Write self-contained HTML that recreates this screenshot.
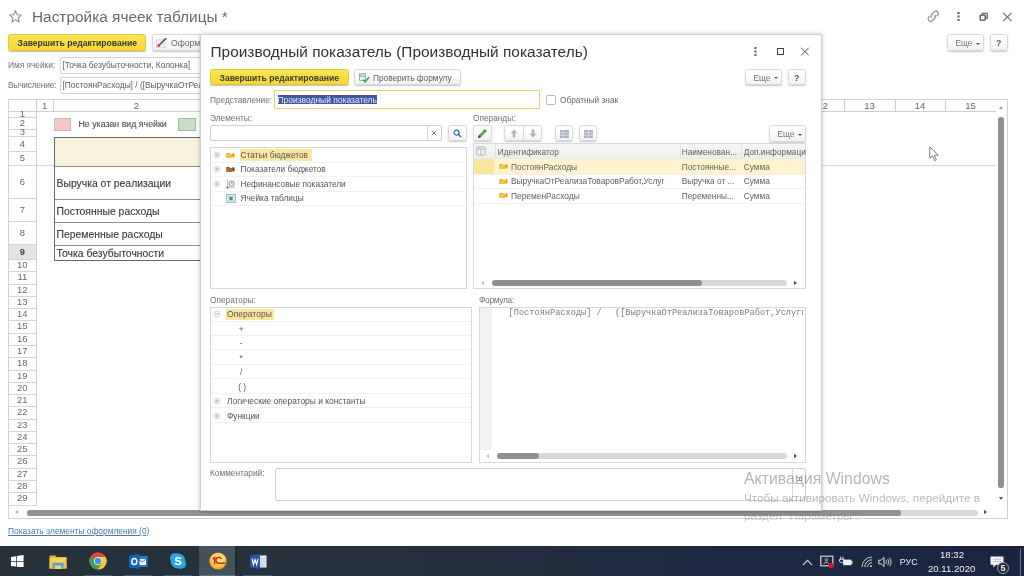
<!DOCTYPE html>
<html lang="ru">
<head>
<meta charset="utf-8">
<title>Настройка ячеек таблицы</title>
<style>
*{box-sizing:border-box;margin:0;padding:0}
html,body{width:1024px;height:576px;overflow:hidden;background:#fff}
body{font-family:"Liberation Sans",sans-serif;font-size:8.3px;color:#4a4a4a;position:relative}
#root{position:absolute;left:0;top:0;width:1024px;height:576px;overflow:hidden;will-change:transform}
.a{position:absolute}
.t{position:absolute;white-space:nowrap;line-height:10px;height:10px;font-size:8.3px;color:#555}
.btn{position:absolute;border:1px solid #d9d9d9;border-radius:2.5px;background:linear-gradient(#ffffff 25%,#f2f2f2);box-shadow:0 1px 1.5px rgba(0,0,0,.22);font-size:8.3px;color:#666;white-space:nowrap}
.ybtn{position:absolute;border:1px solid #e2c53a;border-radius:2.5px;background:linear-gradient(#fbe556,#f6d833);box-shadow:0 1px 1px rgba(0,0,0,.25);font-size:8.6px;font-weight:bold;color:#3b3a2c;white-space:nowrap}
.btn .t,.ybtn .t{color:inherit;font-size:inherit}
.inp{position:absolute;border:1px solid #d0d0d0;background:#fff;border-radius:2px}
.box{position:absolute;border:1px solid #d8d8d8;background:#fff;overflow:hidden}
.hl{position:absolute;background:#f2f2f2;height:1px}
.vl{position:absolute;background:#e3e3e3;width:1px}
#sheet{position:absolute;left:7.5px;top:99px;width:1000.5px;height:420px;border:1px solid #d2d2d2;background:#fff;overflow:hidden}
.rn{position:absolute;left:0;width:28.5px;text-align:center;font-size:9.4px;color:#666;border-bottom:1px solid #d6d6d6;border-right:1px solid #cfcfcf;white-space:nowrap;overflow:visible}
.ch{position:absolute;top:0;height:12px;font-size:9.6px;color:#666;text-align:center;line-height:12px;border-right:1px solid #cfcfcf;border-bottom:1px solid #cfcfcf;background:#fff}
.ct{position:absolute;white-space:nowrap;font-size:10.4px;color:#3a3a3a;line-height:12px;-webkit-text-stroke:0.12px #3a3a3a}
#dlg{position:absolute;left:199.5px;top:34px;width:622.5px;height:477px;background:#fff;border:1px solid #d0d0d0;box-shadow:0 0 5px rgba(0,0,0,.20),0 1px 2px rgba(0,0,0,.12)}
#dlg .t,#dlg .btn,#dlg .ybtn,#dlg .inp,#dlg .box,#dlg .a{ }
#tb{position:absolute;left:0;top:545.5px;width:1024px;height:30.5px;background:linear-gradient(90deg,#25323b 0%,#25313c 38%,#1e2a41 68%,#1a2440 100%);overflow:hidden}
.tw{position:absolute;white-space:nowrap;color:#f2f2f2;line-height:1}
</style>
</head>
<body>
<div id="root">
<!-- MAIN WINDOW -->
<div id="main">
<svg class="a" style="left:8px;top:9px" width="15" height="15" viewBox="0 0 15 15"><path d="M7.5 1.6 L9.1 5.7 L13.4 6 L10.1 8.8 L11.2 13 L7.5 10.6 L3.8 13 L4.9 8.8 L1.6 6 L5.9 5.7 Z" fill="none" stroke="#909090" stroke-width="1.1" stroke-linejoin="round"/></svg>
<div class="t" style="left:32px;top:8px;font-size:15.4px;line-height:18px;height:18px;color:#6a6a6a">Настройка ячеек таблицы *</div>
<div class="ybtn" style="left:8px;top:34px;width:138px;height:16.5px"><div class="t" style="left:8.5px;top:3px">Завершить редактирование</div></div>
<div class="btn" style="left:152px;top:34px;width:72px;height:16.5px"><svg class="a" style="left:3px;top:2.5px" width="10.5" height="10.5" viewBox="0 0 10 10"><rect x="0.6" y="1.8" width="7.8" height="7.6" fill="#f3f4f6" stroke="#c6c9ce" stroke-width="0.7"/><path d="M4.5 1.8V9.4M0.6 5.6H8.4" stroke="#d5d8dc" stroke-width="0.6"/><path d="M9.3 0.5 L4.4 5.4" stroke="#3c3a38" stroke-width="1.25" stroke-linecap="round"/><ellipse cx="2.9" cy="6.9" rx="1.9" ry="1.15" transform="rotate(-45 2.9 6.9)" fill="#d93238"/></svg><div class="t" style="left:18px;top:3px;font-size:8.6px">Оформить</div></div>
<div class="t" style="left:8px;top:60px;color:#707070">Имя ячейки:</div>
<div class="inp" style="left:60px;top:57px;width:300px;height:17px;border-color:#d2d2d2"></div>
<div class="t" style="left:62.5px;top:60px;font-size:8.35px;color:#5c5c5c">[Точка безубыточности, Колонка]</div>
<div class="t" style="left:8px;top:80px;letter-spacing:-0.18px;color:#707070">Вычисление:</div>
<div class="inp" style="left:60px;top:77px;width:300px;height:17px;border-color:#d2d2d2"></div>
<div class="t" style="left:62.5px;top:80px;font-size:8.35px;color:#5c5c5c">[ПостоянРасходы] /  ([ВыручкаОтРеализаТоваровРабот,Услуг</div>
<svg class="a" style="left:926px;top:8.8px" width="14.5" height="14.5" viewBox="0 0 15 15" fill="none" stroke="#949494" stroke-width="1.35"><path d="M6.2 8.8a2.6 2.6 0 0 1 0-3.6l2.6-2.6a2.6 2.6 0 0 1 3.6 3.6l-1.3 1.3"/><path d="M8.8 6.2a2.6 2.6 0 0 1 0 3.6l-2.6 2.6a2.6 2.6 0 0 1-3.6-3.6l1.3-1.3"/></svg>
<svg class="a" style="left:956px;top:11px" width="5" height="11" viewBox="0 0 5 11" fill="#5a5a5a"><rect x="1.5" y="1" width="2" height="2"/><rect x="1.5" y="4.5" width="2" height="2"/><rect x="1.5" y="8" width="2" height="2"/></svg>
<svg class="a" style="left:978.5px;top:12.3px" width="10" height="9.5" viewBox="0 0 10 9.5" fill="none" stroke="#4d4d4d"><path d="M3.2 2.7V1.2H8.2V6.1H6.6" stroke-width="1.1"/><rect x="1.2" y="3.1" width="5" height="5.1" rx="0.6" stroke-width="1.3"/></svg>
<svg class="a" style="left:1002px;top:12px" width="11" height="10" viewBox="0 0 11 10" fill="none" stroke="#6a6a6a" stroke-width="1.1"><path d="M1.2 0.8L9.6 9.2M9.6 0.8L1.2 9.2"/></svg>
<div class="btn" style="left:946.5px;top:34px;width:37px;height:16.5px"><div class="t" style="left:8px;top:3px;color:#707070">Еще</div><div class="a" style="left:28px;top:7.6px;border:2px solid transparent;border-top:2.6px solid #555;border-bottom:0"></div></div>
<div class="btn" style="left:989.5px;top:34px;width:18px;height:16.5px"><div class="t" style="left:5.5px;top:3px;font-weight:bold;font-size:8.8px;color:#555">?</div></div>
<div id="sheet">
<div class="ch" style="left:0px;width:28.5px"></div><div class="ch" style="left:28.5px;width:16.5px">1</div><div class="ch" style="left:45px;width:167px">2</div><div class="ch" style="left:781px;width:55px;text-align:left;padding-left:28px">12</div><div class="ch" style="left:836px;width:51px;">13</div><div class="ch" style="left:887px;width:50px;">14</div><div class="ch" style="left:937px;width:50px;border-right:0;">15</div><div class="ch" style="left:212px;width:569px"></div>
<div class="rn" style="top:11.50px;height:6.00px;line-height:4.40px;">1</div><div class="rn" style="top:17.50px;height:12.50px;line-height:10.90px;">2</div><div class="rn" style="top:30.00px;height:6.50px;line-height:4.90px;">3</div><div class="rn" style="top:36.50px;height:15.20px;line-height:13.60px;">4</div><div class="rn" style="top:51.70px;height:14.30px;line-height:12.70px;">5</div><div class="rn" style="top:66.00px;height:33.00px;line-height:31.40px;">6</div><div class="rn" style="top:99.00px;height:23.00px;line-height:21.40px;">7</div><div class="rn" style="top:122.00px;height:23.00px;line-height:21.40px;">8</div><div class="rn" style="top:145.00px;height:15.00px;line-height:13.40px;background:#e4e4e4;font-weight:bold;color:#444;">9</div><div class="rn" style="top:160.00px;height:12.28px;line-height:10.68px;">10</div><div class="rn" style="top:172.28px;height:12.28px;line-height:10.68px;">11</div><div class="rn" style="top:184.56px;height:12.28px;line-height:10.68px;">12</div><div class="rn" style="top:196.84px;height:12.28px;line-height:10.68px;">13</div><div class="rn" style="top:209.12px;height:12.28px;line-height:10.68px;">14</div><div class="rn" style="top:221.40px;height:12.28px;line-height:10.68px;">15</div><div class="rn" style="top:233.68px;height:12.28px;line-height:10.68px;">16</div><div class="rn" style="top:245.96px;height:12.28px;line-height:10.68px;">17</div><div class="rn" style="top:258.24px;height:12.28px;line-height:10.68px;">18</div><div class="rn" style="top:270.52px;height:12.28px;line-height:10.68px;">19</div><div class="rn" style="top:282.80px;height:12.28px;line-height:10.68px;">20</div><div class="rn" style="top:295.08px;height:12.28px;line-height:10.68px;">21</div><div class="rn" style="top:307.36px;height:12.28px;line-height:10.68px;">22</div><div class="rn" style="top:319.64px;height:12.28px;line-height:10.68px;">23</div><div class="rn" style="top:331.92px;height:12.28px;line-height:10.68px;">24</div><div class="rn" style="top:344.20px;height:12.28px;line-height:10.68px;">25</div><div class="rn" style="top:356.48px;height:12.28px;line-height:10.68px;">26</div><div class="rn" style="top:368.76px;height:12.28px;line-height:10.68px;">27</div><div class="rn" style="top:381.04px;height:12.28px;line-height:10.68px;">28</div><div class="rn" style="top:393.32px;height:12.28px;line-height:10.68px;">29</div>
<div class="hl" style="left:28.5px;top:65.19999999999999px;width:960px;background:#d9d9d9"></div>
<div class="a" style="left:45px;top:17.5px;width:17px;height:13px;background:#f8c6c9;border:1px solid #c9b7b8"></div><div class="ct" style="left:70px;top:18px;font-size:8.8px;color:#555">Не указан вид ячейки</div><div class="a" style="left:169px;top:17.5px;width:18px;height:13px;background:#c9dfc3;border:1px solid #a9b8a5"></div>
<div class="a" style="left:45px;top:36.5px;width:400px;height:124px;border:1px solid #6a6a6a;border-right:0;background:#fff"></div><div class="a" style="left:46px;top:37.5px;width:400px;height:28.5px;background:#f8f1dc"></div><div class="hl" style="left:46px;top:65.5px;width:400px;background:#8f8f8f"></div><div class="hl" style="left:46px;top:98.5px;width:400px;background:#8f8f8f"></div><div class="hl" style="left:46px;top:121.5px;width:400px;background:#8f8f8f"></div><div class="hl" style="left:46px;top:144.5px;width:400px;background:#8f8f8f"></div><div class="ct" style="left:48px;top:78.19999999999999px">Выручка от реализации</div><div class="ct" style="left:48px;top:106.19999999999999px">Постоянные расходы</div><div class="ct" style="left:48px;top:129.2px">Переменные расходы</div><div class="ct" style="left:48px;top:147.7px">Точка безубыточности</div>
<div class="a" style="left:987px;top:0px;width:12px;height:406px;background:#fff"></div><div class="a" style="left:990.3px;top:6px;border:2.2px solid transparent;border-bottom:3px solid #a8a8a8;border-top:0"></div><div class="a" style="left:989.5px;top:17.299999999999997px;width:5.7px;height:370.5px;border-radius:2.8px;background:#929292"></div><div class="a" style="left:990.3px;top:396.5px;border:2.2px solid transparent;border-top:3px solid #555;border-bottom:0"></div><div class="a" style="left:0;top:406.5px;width:1000px;height:13px;background:#fff"></div><div class="a" style="left:6px;top:410.3px;border:2.2px solid transparent;border-right:3px solid #b0b0b0;border-left:0"></div><div class="a" style="left:18px;top:410.2px;width:951px;height:5.6px;border-radius:2.8px;background:#d9d9d9"></div><div class="a" style="left:18px;top:410.2px;width:874px;height:5.6px;border-radius:2.8px;background:#919191"></div><div class="a" style="left:975.5px;top:410.3px;border:2.2px solid transparent;border-left:3px solid #444;border-right:0"></div></div>
<div class="t" style="left:8px;top:526px;font-size:8.4px;color:#4a76a8;text-decoration:underline">Показать элементы оформления (0)</div>
<svg class="a" style="left:929px;top:145.5px" width="12" height="17" viewBox="0 0 12 17"><path d="M0.8 0.9 L0.8 12.2 L3.5 9.8 L5.6 14.6 L7.4 13.8 L5.3 9.2 L9.3 9.2 Z" fill="#fff" stroke="#6e6e6e" stroke-width="0.9" stroke-linejoin="round"/></svg>
</div>
<!-- DIALOG -->
<div id="dlg">
<div class="t" style="left:10.0px;top:8px;font-size:15.43px;line-height:18px;height:18px;color:#333">Производный показатель (Производный показатель)</div>
<svg class="a" style="left:552.7px;top:10.6px" width="5" height="11" viewBox="0 0 5 11" fill="#5a5a5a"><rect x="1.5" y="1" width="2" height="2"/><rect x="1.5" y="4.5" width="2" height="2"/><rect x="1.5" y="8" width="2" height="2"/></svg><div class="a" style="left:576.3px;top:12.9px;width:7.4px;height:7.2px;border:1.3px solid #444"></div><svg class="a" style="left:599.7px;top:11.8px" width="10" height="9.1" viewBox="0 0 11 10" fill="none" stroke="#555" stroke-width="1.1"><path d="M1.2 0.8L9.6 9.2M9.6 0.8L1.2 9.2"/></svg>
<div class="ybtn" style="left:9.5px;top:33.5px;width:139px;height:16.5px"><div class="t" style="left:8.5px;top:3px">Завершить редактирование</div></div>
<div class="btn" style="left:153.5px;top:33.5px;width:107px;height:16.5px"><svg class="a" style="left:4px;top:3px" width="11" height="10" viewBox="0 0 11 10"><rect x="0.6" y="0.6" width="5.8" height="6.8" fill="#eef3f8" stroke="#8aa0b8" stroke-width="0.8"/><text x="1.2" y="4.2" font-size="3.6" font-family="Liberation Sans" fill="#56708c">f(x)</text><path d="M4.2 6.6 L6.2 8.8 L10.2 4" fill="none" stroke="#3fa845" stroke-width="1.7"/></svg><div class="t" style="left:18px;top:3px;color:#5c5c5c">Проверить формулу</div></div>
<div class="btn" style="left:544.0px;top:33.5px;width:37px;height:16.5px"><div class="t" style="left:8px;top:3px;color:#707070">Еще</div><div class="a" style="left:28px;top:7.6px;border:2px solid transparent;border-top:2.6px solid #555;border-bottom:0"></div></div>
<div class="btn" style="left:587.0px;top:33.5px;width:18px;height:16.5px"><div class="t" style="left:5.5px;top:3px;font-weight:bold;font-size:8.8px;color:#555">?</div></div>
<div class="t" style="left:9.5px;top:59.5px;color:#707070">Представление:</div><div class="inp" style="left:73.0px;top:55px;width:266.5px;height:18.5px;border:1.5px solid #edd067;border-radius:1px"></div><div class="a" style="left:77.0px;top:59.5px;width:99.5px;height:9.6px;background:#3f589f"></div><div class="t" style="left:77.0px;top:59.5px;font-size:8.46px;color:#e8ecf6">Производный показатель</div><div class="a" style="left:345.0px;top:59.5px;width:10px;height:10px;border:1px solid #b9b9b9;border-radius:1.5px;background:#fff"></div><div class="t" style="left:359.5px;top:59.5px;color:#666">Обратный знак</div>
<div class="t" style="left:9.5px;top:77.5px;color:#707070">Элементы:</div><div class="t" style="left:272.5px;top:77.5px;color:#707070">Операнды:</div>
<div class="inp" style="left:9.5px;top:90px;width:231.5px;height:15.5px"></div><div class="vl" style="left:226.5px;top:91px;height:13.5px;background:#d6d6d6"></div><svg class="a" style="left:230.5px;top:95px" width="6" height="6" viewBox="0 0 6 6" stroke="#666" stroke-width="0.9"><path d="M0.8 0.8L5.2 5.2M5.2 0.8L0.8 5.2"/></svg><div class="btn" style="left:247.0px;top:90px;width:19px;height:16px"><svg class="a" style="left:4.5px;top:3px" width="9" height="9" viewBox="0 0 9 9" fill="none"><circle cx="3.6" cy="3.6" r="2.5" stroke="#2b6fae" stroke-width="1.2"/><path d="M5.6 5.6L8.2 8.2" stroke="#2b6fae" stroke-width="1.4"/></svg></div>
<div class="btn" style="left:272.5px;top:90px;width:18.5px;height:16px"><svg class="a" style="left:3px;top:2px" width="11" height="11" viewBox="0 0 10 10"><path d="M1 9 L1.8 6.3 L7.2 0.9 L9.1 2.8 L3.7 8.2 Z" fill="#58a857"/><path d="M1 9 L1.8 6.3 L3.7 8.2 Z" fill="#2a2a2a"/><path d="M6.4 1.7 L8.3 3.6" stroke="#1f5f27" stroke-width="0.6"/></svg></div><div class="btn" style="left:303.5px;top:90px;width:37.5px;height:16px"><div class="vl" style="left:18px;top:0;height:14px;background:#d9d9d9"></div><svg class="a" style="left:5px;top:3px" width="8" height="9" viewBox="0 0 8 9"><path d="M4 0.5 L7.5 4.3 H5.3 V8.5 H2.7 V4.3 H0.5 Z" fill="#a9b3c1"/></svg><svg class="a" style="left:23.5px;top:3px" width="8" height="9" viewBox="0 0 8 9"><path d="M4 8.5 L7.5 4.7 H5.3 V0.5 H2.7 V4.7 H0.5 Z" fill="#a9b3c1"/></svg></div><div class="btn" style="left:354.0px;top:90px;width:18.5px;height:16px"><svg class="a" style="left:4px;top:3.5px" width="9" height="8" viewBox="0 0 9 8"><rect x="0" y="0" width="9" height="8" fill="#a9b3c1"/><path d="M0 2.8H9M0 5.4H9M3 0V8" stroke="#e9eaec" stroke-width="0.7"/></svg></div><div class="btn" style="left:378.0px;top:90px;width:18.5px;height:16px"><svg class="a" style="left:4px;top:3.5px" width="9" height="8" viewBox="0 0 9 8"><rect x="0" y="0" width="9" height="8" fill="#a9b3c1"/><path d="M0 2.8H9M0 5.4H9M4.5 0V8" stroke="#e9eaec" stroke-width="0.7"/></svg></div><div class="btn" style="left:568.0px;top:90px;width:37px;height:16.5px"><div class="t" style="left:8px;top:3px;color:#707070">Еще</div><div class="a" style="left:28px;top:7.6px;border:2px solid transparent;border-top:2.6px solid #555;border-bottom:0"></div></div>
<div class="box" style="left:9.5px;top:112px;width:256.5px;height:141.5px"></div>
<div class="hl" style="left:10.5px;top:126.5px;width:254.5px"></div><div class="hl" style="left:10.5px;top:141.0px;width:254.5px"></div><div class="hl" style="left:10.5px;top:155.5px;width:254.5px"></div><div class="hl" style="left:10.5px;top:170.0px;width:254.5px"></div><div class="a" style="left:39.0px;top:113.5px;width:72px;height:12.5px;background:#fbe6a0"></div><svg class="a" style="left:12.5px;top:116px" width="8" height="8" viewBox="0 0 8 8"><circle cx="4" cy="4" r="3" fill="#f6f6f6" stroke="#d2d2d2" stroke-width="0.8"/><path d="M2.2 4H5.8M4 2.2V5.8" stroke="#a8a8a8" stroke-width="0.8"/></svg><div class="a" style="left:25.5px;top:115.5px"><svg width="9" height="8.1" viewBox="0 0 10 9"><path d="M0.5 2.2h3.2l0.8 1h2v4.6h-6z" fill="#e3a91e"/><path d="M0.5 3.4h6v4.4h-6z" fill="#f0c63c"/><rect x="6.8" y="2.6" width="2.8" height="4.6" rx="0.8" fill="#e3a91e"/></svg></div><div class="t" style="left:40.0px;top:115px;color:#555">Статьи бюджетов</div>
<svg class="a" style="left:12.5px;top:130.3px" width="8" height="8" viewBox="0 0 8 8"><circle cx="4" cy="4" r="3" fill="#f6f6f6" stroke="#d2d2d2" stroke-width="0.8"/><path d="M2.2 4H5.8M4 2.2V5.8" stroke="#a8a8a8" stroke-width="0.8"/></svg><div class="a" style="left:25.5px;top:129.8px"><svg width="9" height="8.1" viewBox="0 0 10 9"><path d="M0.5 2.2h3.2l0.8 1h2v4.6h-6z" fill="#8c4a2a"/><path d="M0.5 3.4h6v4.4h-6z" fill="#b36a3e"/><rect x="6.8" y="2.6" width="2.8" height="4.6" rx="0.8" fill="#8c4a2a"/></svg></div><div class="t" style="left:40.0px;top:129.3px;color:#555">Показатели бюджетов</div>
<svg class="a" style="left:12.5px;top:144.8px" width="8" height="8" viewBox="0 0 8 8"><circle cx="4" cy="4" r="3" fill="#f6f6f6" stroke="#d2d2d2" stroke-width="0.8"/><path d="M2.2 4H5.8M4 2.2V5.8" stroke="#a8a8a8" stroke-width="0.8"/></svg><svg class="a" style="left:25.5px;top:143.8px" width="10" height="10" viewBox="0 0 10 10" fill="none"><path d="M1.5 0.5V8.5H9" stroke="#7a8aa0" stroke-width="0.8" stroke-dasharray="1.2 0.8"/><circle cx="5.6" cy="4.6" r="2.6" stroke="#5b7ea8" stroke-width="0.9"/><path d="M5.6 3.2V4.8H6.8" stroke="#5b7ea8" stroke-width="0.7"/><rect x="0.5" y="7.5" width="2" height="2" fill="#d04a3a"/></svg><div class="t" style="left:40.0px;top:143.8px;color:#555">Нефинансовые показатели</div>
<svg class="a" style="left:25.5px;top:158.8px" width="10" height="9" viewBox="0 0 10 9"><rect x="0.5" y="0.5" width="9" height="8" fill="#eaf3fa" stroke="#86a9c8" stroke-width="0.8"/><path d="M3 0.5V8.5M7 0.5V8.5M0.5 2.5H9.5M0.5 6.5H9.5" stroke="#b5cbe0" stroke-width="0.6"/><rect x="3.4" y="2.9" width="3.2" height="3.2" fill="#3c9c3c"/></svg><div class="t" style="left:40.0px;top:158.3px;color:#555">Ячейка таблицы</div>
<div class="box" style="left:272.5px;top:108px;width:333px;height:145.5px"></div><div class="a" style="left:273.5px;top:109px;width:331px;height:15px;background:linear-gradient(#f5f5f5,#efefef);border-bottom:1px solid #e9e9e9"></div><div class="vl" style="left:294.0px;top:109px;height:15px;background:#e2e2e2"></div><div class="vl" style="left:479.0px;top:109px;height:15px;background:#e2e2e2"></div><div class="vl" style="left:540.5px;top:109px;height:15px;background:#e2e2e2"></div><svg class="a" style="left:275.5px;top:111px" width="10" height="10" viewBox="0 0 10 10" fill="none" stroke="#a9a9a9" stroke-width="0.8"><rect x="0.8" y="0.8" width="8.4" height="8.4" rx="1"/><path d="M0.8 3H9.2M5 3V9.2"/><path d="M2.2 1.2l1 1 1.4-1.6" stroke-width="0.6"/></svg><div class="t" style="left:297.25px;top:111.5px;color:#5f5f5f;">Идентификатор</div><div class="t" style="left:481.25px;top:111.5px;color:#5f5f5f;">Наименован...</div><div class="t" style="left:543.25px;top:111.5px;color:#5f5f5f;width:62px;overflow:hidden">Доп.информаци</div><div class="a" style="left:273.5px;top:124px;width:331px;height:14.5px;background:#fdf3cf"></div><div class="a" style="left:273.5px;top:124px;width:20px;height:14.5px;background:#fae59c"></div><div class="hl" style="left:273.5px;top:138.5px;width:331px"></div><div class="hl" style="left:273.5px;top:153.0px;width:331px"></div><div class="hl" style="left:273.5px;top:167.5px;width:331px"></div><div class="a" style="left:298.0px;top:127.25px"><svg width="9" height="8.1" viewBox="0 0 10 9"><path d="M0.5 2.2h3.2l0.8 1h2v4.6h-6z" fill="#e3a91e"/><path d="M0.5 3.4h6v4.4h-6z" fill="#f0c63c"/><rect x="6.8" y="2.6" width="2.8" height="4.6" rx="0.8" fill="#e3a91e"/></svg></div><div class="t" style="left:310.5px;top:126.75px;color:#6a6456;font-size:8.4px">ПостоянРасходы</div><div class="t" style="left:481.25px;top:126.75px;color:#6a6456">Постоянные...</div><div class="t" style="left:543.25px;top:126.75px;color:#6a6456">Сумма</div>
<div class="a" style="left:298.0px;top:141.75px"><svg width="9" height="8.1" viewBox="0 0 10 9"><path d="M0.5 2.2h3.2l0.8 1h2v4.6h-6z" fill="#e3a91e"/><path d="M0.5 3.4h6v4.4h-6z" fill="#f0c63c"/><rect x="6.8" y="2.6" width="2.8" height="4.6" rx="0.8" fill="#e3a91e"/></svg></div><div class="t" style="left:310.5px;top:141.25px;color:#5f5f5f;font-size:8.4px">ВыручкаОтРеализаТоваровРабот,Услуг</div><div class="t" style="left:481.25px;top:141.25px;color:#5f5f5f">Выручка от ...</div><div class="t" style="left:543.25px;top:141.25px;color:#5f5f5f">Сумма</div>
<div class="a" style="left:298.0px;top:156.0px"><svg width="9" height="8.1" viewBox="0 0 10 9"><path d="M0.5 2.2h3.2l0.8 1h2v4.6h-6z" fill="#e3a91e"/><path d="M0.5 3.4h6v4.4h-6z" fill="#f0c63c"/><rect x="6.8" y="2.6" width="2.8" height="4.6" rx="0.8" fill="#e3a91e"/></svg></div><div class="t" style="left:310.5px;top:155.5px;color:#5f5f5f;font-size:8.4px">ПеременРасходы</div><div class="t" style="left:481.25px;top:155.5px;color:#5f5f5f">Переменны...</div><div class="t" style="left:543.25px;top:155.5px;color:#5f5f5f">Сумма</div>
<div class="a" style="left:280.0px;top:245.5px;border:2.2px solid transparent;border-right:3px solid #bdbdbd;border-left:0"></div><div class="a" style="left:291.25px;top:244.7px;width:295.25px;height:6px;border-radius:3px;background:#d8d8d8"></div><div class="a" style="left:291.25px;top:244.7px;width:210.25px;height:6px;border-radius:3px;background:#8f8f8f"></div><div class="a" style="left:593.75px;top:245.5px;border:2.2px solid transparent;border-left:3px solid #444;border-right:0"></div>
<div class="t" style="left:9.5px;top:260px;color:#707070">Операторы:</div><div class="t" style="left:278.5px;top:260px;letter-spacing:-0.26px;color:#707070">Формула:</div>
<div class="box" style="left:9.5px;top:271.5px;width:261.5px;height:156px"></div><div class="hl" style="left:10.5px;top:285.62px;width:259.5px"></div><div class="hl" style="left:10.5px;top:300.04px;width:259.5px"></div><div class="hl" style="left:10.5px;top:314.46px;width:259.5px"></div><div class="hl" style="left:10.5px;top:328.88px;width:259.5px"></div><div class="hl" style="left:10.5px;top:343.3px;width:259.5px"></div><div class="hl" style="left:10.5px;top:357.72px;width:259.5px"></div><div class="hl" style="left:10.5px;top:372.14px;width:259.5px"></div><div class="hl" style="left:10.5px;top:386.56px;width:259.5px"></div><div class="a" style="left:25.0px;top:273.5px;width:48px;height:11.5px;background:#fbe6a0"></div><svg class="a" style="left:12.5px;top:274.9px" width="8" height="8" viewBox="0 0 8 8"><circle cx="4" cy="4" r="3" fill="#f6f6f6" stroke="#d2d2d2" stroke-width="0.8"/><path d="M2.2 4H5.8" stroke="#a8a8a8" stroke-width="0.8"/></svg><div class="t" style="left:26.5px;top:274px;font-size:8.55px;color:#555">Операторы</div><div class="t" style="left:38.3px;top:288.75px;color:#555">+</div><div class="t" style="left:39.3px;top:303.2px;color:#555">-</div><div class="t" style="left:39.0px;top:317.7px;color:#555">*</div><div class="t" style="left:39.5px;top:332px;color:#555">/</div><div class="t" style="left:37.8px;top:346.6px;color:#555">( )</div><svg class="a" style="left:12.5px;top:362.2px" width="8" height="8" viewBox="0 0 8 8"><circle cx="4" cy="4" r="3" fill="#f6f6f6" stroke="#d2d2d2" stroke-width="0.8"/><path d="M2.2 4H5.8M4 2.2V5.8" stroke="#a8a8a8" stroke-width="0.8"/></svg><div class="t" style="left:26.5px;top:361.3px;font-size:8.41px;color:#555">Логические операторы и константы</div><svg class="a" style="left:12.5px;top:376.6px" width="8" height="8" viewBox="0 0 8 8"><circle cx="4" cy="4" r="3" fill="#f6f6f6" stroke="#d2d2d2" stroke-width="0.8"/><path d="M2.2 4H5.8M4 2.2V5.8" stroke="#a8a8a8" stroke-width="0.8"/></svg><div class="t" style="left:26.5px;top:375.7px;color:#555">Функции</div>
<div class="box" style="left:278.0px;top:271.5px;width:327.5px;height:156px"></div><div class="a" style="left:279.0px;top:272.5px;width:12.5px;height:142px;background:#f1f1f1"></div><div class="t" style="left:308.1px;top:272.5px;font-family:'Liberation Mono',monospace;font-size:8.64px;color:#7d7d7d;white-space:pre">[ПостоянРасходы] /</div><div class="t" style="left:414.5px;top:272.5px;width:187.5px;overflow:hidden;font-family:'Liberation Mono',monospace;font-size:8.64px;color:#7d7d7d;white-space:pre">([ВыручкаОтРеализаТоваровРабот,Услуги])</div><div class="a" style="left:285.75px;top:419.1px;border:2.2px solid transparent;border-right:3px solid #bdbdbd;border-left:0"></div><div class="a" style="left:296.75px;top:418.3px;width:289.75px;height:6px;border-radius:3px;background:#d8d8d8"></div><div class="a" style="left:296.75px;top:418.3px;width:41.75px;height:6px;border-radius:3px;background:#8f8f8f"></div><div class="a" style="left:593.75px;top:419.1px;border:2.2px solid transparent;border-left:3px solid #444;border-right:0"></div>
<div class="t" style="left:9.5px;top:433.3px;color:#707070">Комментарий:</div><div class="inp" style="left:74.5px;top:433px;width:531px;height:33px"></div><div class="vl" style="left:591.5px;top:434px;height:31px;background:#d8d8d8"></div>
<div class="a" style="left:596.0px;top:442px;width:5px;height:1px;background:#999"></div><div class="a" style="left:596.0px;top:445px;width:5px;height:1px;background:#999"></div><div class="a" style="left:598.0px;top:442px;width:1px;height:4px;background:#999"></div></div>
<!-- WATERMARK -->
<div class="t" style="left:744px;top:470px;font-size:15.84px;line-height:18px;height:18px;color:rgba(120,120,120,.55)">Активация Windows</div>
<div class="t" style="left:744px;top:491px;font-size:11.74px;line-height:14px;height:14px;color:rgba(120,120,120,.50)">Чтобы активировать Windows, перейдите в</div>
<div class="t" style="left:744px;top:509px;font-size:11.74px;line-height:14px;height:14px;color:rgba(120,120,120,.38)">раздел "Параметры".</div>
<!-- TASKBAR -->
<div id="tb">
<div class="a" style="left:199px;top:0;width:35.5px;height:31px;background:#45525b"></div><div class="a" style="left:235px;top:1px;width:1.5px;height:30px;background:#1e2930"></div><svg class="a" style="left:11px;top:9.2px" width="12.6" height="12.8" viewBox="0 0 14 14" fill="#fff"><path d="M0 2 L5.8 1.2 V6.6 H0Z M6.6 1.1 L14 0 V6.6 H6.6Z M0 7.4 H5.8 V12.8 L0 12Z M6.6 7.4 H14 V14 L6.6 12.9Z"/></svg><svg class="a" style="left:49px;top:8.0px" width="18" height="16" viewBox="0 0 18 16"><path d="M0.5 1.5h6l1.2 1.6h9.8v3H0.5z" fill="#e9b43a"/><rect x="0.5" y="4" width="17" height="10.5" fill="#f6d264"/><rect x="0.5" y="8" width="17" height="6.5" fill="#f1c244"/><rect x="3.5" y="9" width="11" height="5.5" fill="#4aa3e0"/><rect x="5.8" y="11.5" width="6.4" height="3.5" fill="#f6d264"/></svg><svg class="a" style="left:89px;top:6.5px" width="18" height="18" viewBox="0 0 18 18"><circle cx="9" cy="9" r="8.6" fill="#de4a3a"/><path d="M9 9 L1.55 4.7 A8.6 8.6 0 0 0 9 17.6 L12.9 11.2Z" fill="#3da153"/><path d="M9 9 L16.45 4.7 H9Z M9 17.6 A8.6 8.6 0 0 0 16.45 4.7 H9 L12.9 11.2Z" fill="#f6c93a"/><path d="M1.55 4.7 A8.6 8.6 0 0 1 16.45 4.7 H9Z" fill="#de4a3a"/><circle cx="9" cy="9" r="4" fill="#f4f4f4"/><circle cx="9" cy="9" r="3.2" fill="#4a8ce8"/></svg><svg class="a" style="left:128.5px;top:8.5px" width="19" height="15" viewBox="0 0 19 15"><rect x="7" y="2" width="11.5" height="11" fill="#1f7fd6"/><path d="M9.5 5 H17 V11 H9.5Z" fill="#fff"/><path d="M9.5 5 L13.2 8.2 L17 5" fill="none" stroke="#1f7fd6" stroke-width="1"/><path d="M0 1.6 L10.5 0 V15 L0 13.4Z" fill="#0e62b8"/><ellipse cx="5.3" cy="7.5" rx="2.5" ry="3.1" fill="none" stroke="#fff" stroke-width="1.5"/></svg><svg class="a" style="left:169px;top:6.5px" width="18" height="18" viewBox="0 0 18 18"><circle cx="6" cy="6" r="5" fill="#2aa4e6"/><circle cx="12" cy="12" r="5" fill="#2aa4e6"/><circle cx="9" cy="9" r="7.4" fill="#2aa4e6"/><text x="9" y="13.2" text-anchor="middle" font-family="Liberation Sans" font-weight="bold" font-size="11.5" fill="#fff">S</text></svg><svg class="a" style="left:209px;top:6.5px" width="18" height="18" viewBox="0 0 18 18"><defs><radialGradient id="g1c" cx="50%" cy="38%" r="62%"><stop offset="0" stop-color="#fff6b8"/><stop offset="0.55" stop-color="#fbd64c"/><stop offset="1" stop-color="#ee9a28"/></radialGradient></defs><circle cx="9" cy="9" r="8.6" fill="url(#g1c)"/><path d="M3.6 7.2 L5.6 5.6 V12.2" fill="none" stroke="#d9261c" stroke-width="1.5"/><path d="M12.4 7 A2.9 2.9 0 1 0 10 11.2 H16.4" fill="none" stroke="#d9261c" stroke-width="1.5"/></svg><svg class="a" style="left:249.5px;top:8.0px" width="17" height="15" viewBox="0 0 17 15"><rect x="8" y="1.5" width="8.5" height="12" fill="#f4f6fa"/><path d="M10 4H15.5M10 6H15.5M10 8H15.5M10 10H15.5M10 12H15.5" stroke="#9fb1cf" stroke-width="0.8"/><path d="M0 1.6 L10 0 V15 L0 13.4Z" fill="#2a569f"/><path d="M2 4.6 L3.4 10.6 L5 5.6 L6.6 10.6 L8 4.6" fill="none" stroke="#fff" stroke-width="1.2"/></svg><div class="a" style="left:84px;top:29px;width:28px;height:1px;background:#6fa6d6;opacity:.4"></div><div class="a" style="left:124px;top:29px;width:28px;height:1px;background:#6fa6d6;opacity:.4"></div><div class="a" style="left:164px;top:29px;width:28px;height:1px;background:#6fa6d6;opacity:.4"></div><div class="a" style="left:199px;top:29px;width:37px;height:1px;background:#6fa6d6;opacity:.4"></div><div class="a" style="left:243px;top:29px;width:29px;height:1px;background:#6fa6d6;opacity:.4"></div>
<svg class="a" style="left:802px;top:13.0px" width="11" height="7" viewBox="0 0 11 7" fill="none" stroke="#c9ccd2" stroke-width="1.1"><path d="M1 6 L5.5 1.4 L10 6"/></svg><svg class="a" style="left:820px;top:9.5px" width="15" height="14" viewBox="0 0 15 14" fill="none"><rect x="0.8" y="1.2" width="12" height="9.6" stroke="#dfe1e5" stroke-width="1.1"/><circle cx="6.4" cy="4.8" r="1.2" stroke="#c9ccd2" stroke-width="0.9"/><path d="M4 9 C4.2 7 8.6 7 8.8 9" stroke="#c9ccd2" stroke-width="0.9"/><circle cx="11.2" cy="10.6" r="2.6" fill="#e81123"/></svg><svg class="a" style="left:838.5px;top:10.5px" width="14" height="11" viewBox="0 0 14 11" fill="none"><path d="M1.6 0.6V3.2M4 0.6V3.2M0.6 3.2H5V5.2C5 6.4 3.8 6.6 2.8 6.6C1.8 6.6 0.6 6.4 0.6 5.2Z" stroke="#f0f0f0" stroke-width="0.9"/><rect x="4.2" y="3.6" width="8.2" height="5.6" fill="#f0f0f0"/><rect x="12.4" y="5" width="1.2" height="2.8" fill="#f0f0f0"/></svg><svg class="a" style="left:860.5px;top:10.0px" width="12" height="12" viewBox="0 0 12 12" fill="none" stroke="#d4d7dc" stroke-width="1"><path d="M1 11 A10 10 0 0 1 11 1" opacity=".9"/><path d="M3.8 11 A7.2 7.2 0 0 1 11 3.8"/><path d="M6.6 11 A4.4 4.4 0 0 1 11 6.6"/><circle cx="10" cy="10.2" r="0.9" fill="#e8e8e8" stroke="none"/></svg><svg class="a" style="left:877.5px;top:10.0px" width="14" height="12" viewBox="0 0 14 12" fill="none" stroke="#dcdfe3" stroke-width="1"><path d="M0.8 4.2H3L6 1.4V10.6L3 7.8H0.8Z"/><path d="M8 4.2Q9.2 6 8 7.8M9.8 2.8Q12 6 9.8 9.2M11.6 1.6Q14.6 6 11.6 10.4" stroke-width="0.9"/></svg><div class="tw" style="left:899.8px;top:12.0px;font-size:8.9px">РУС</div><div class="tw" style="left:940px;top:4.5px;font-size:9.6px">18:32</div><div class="tw" style="left:928px;top:18.5px;font-size:9.6px">20.11.2020</div><svg class="a" style="left:989.5px;top:10.0px" width="14" height="12" viewBox="0 0 14 12"><path d="M0.5 0.5H13.5V8.8H6.2L3.4 11.4V8.8H0.5Z" fill="#f2f2f2"/><path d="M3 3.2H11M3 5.6H11" stroke="#a7adb8" stroke-width="0.8"/></svg><div class="a" style="left:997px;top:16.3px;width:12px;height:12px;border-radius:50%;background:#23262f;border:1px solid #9b9ea6"></div><div class="tw" style="left:1000.5px;top:18.2px;font-size:9px;font-weight:bold">5</div><div class="a" style="left:1019.5px;top:3px;width:1px;height:27px;background:#6d7688"></div></div>
</div>
</body>
</html>
